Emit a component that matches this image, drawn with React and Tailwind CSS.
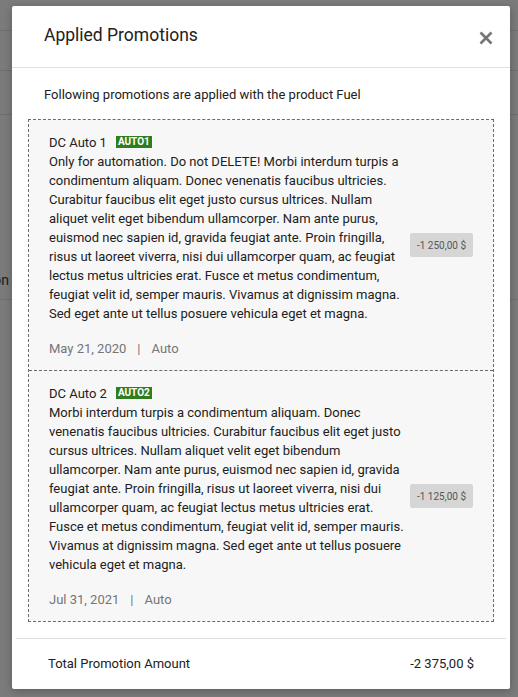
import React from "react";

const cards = [
  {
    title: "DC Auto 1",
    code: "AUTO1",
    text:
      "Only for automation. Do not DELETE! Morbi interdum turpis a condimentum aliquam. Donec venenatis faucibus ultricies. Curabitur faucibus elit eget justo cursus ultrices. Nullam aliquet velit eget bibendum ullamcorper. Nam ante purus, euismod nec sapien id, gravida feugiat ante. Proin fringilla, risus ut laoreet viverra, nisi dui ullamcorper quam, ac feugiat lectus metus ultricies erat. Fusce et metus condimentum, feugiat velit id, semper mauris. Vivamus at dignissim magna. Sed eget ante ut tellus posuere vehicula eget et magna.",
    date: "May 21, 2020",
    amount: "-1 250,00 $",
  },
  {
    title: "DC Auto 2",
    code: "AUTO2",
    text:
      "Morbi interdum turpis a condimentum aliquam. Donec venenatis faucibus ultricies. Curabitur faucibus elit eget justo cursus ultrices. Nullam aliquet velit eget bibendum ullamcorper. Nam ante purus, euismod nec sapien id, gravida feugiat ante. Proin fringilla, risus ut laoreet viverra, nisi dui ullamcorper quam, ac feugiat lectus metus ultricies erat. Fusce et metus condimentum, feugiat velit id, semper mauris. Vivamus at dignissim magna. Sed eget ante ut tellus posuere vehicula eget et magna.",
    date: "Jul 31, 2021",
    amount: "-1 125,00 $",
  },
];

function Card({ c, first }) {
  return (
    <div
      className={
        "flex items-center bg-[#f7f7f7] pl-[20px] pr-[20px] " +
        (first ? "" : "border-t border-dashed border-[#6b6b6b]")
      }
    >
      <div className="w-[357px] pt-[13px] pb-[12px]">
        <div className="flex items-center gap-[9px] h-[19px]">
          <span className="text-[13px] leading-[19px] text-[#212121]">{c.title}</span>
          <span className="bg-[#2f7d1f] text-white text-[10px] font-bold leading-[12px] px-[2px] mt-[-2px]">
            {c.code}
          </span>
        </div>
        <p className="text-[13px] leading-[19px] text-[#212121]">{c.text}</p>
        <div className="mt-[16px] text-[13px] leading-[19px] text-[#757575] flex gap-[11px]">
          <span>{c.date}</span>
          <span>|</span>
          <span>Auto</span>
        </div>
      </div>
      <div className="ml-auto bg-[#d6d6d6] rounded-[2px] w-[63px] h-[24px] flex items-center justify-center text-[10px] text-[#555]">
        {c.amount}
      </div>
    </div>
  );
}

export default function App() {
  return (
    <div
      className="relative w-[518px] h-[697px] overflow-hidden bg-[#7b7b7b]"
      style={{ fontFamily: "Roboto, 'Liberation Sans', sans-serif" }}
    >
      {/* dimmed page behind */}
      <div className="flex flex-col">
        <div className="h-[31px] border-b border-[#6e6e6e]" />
        <div className="h-[40px] border-b border-[#6e6e6e]" />
        <div className="h-[44px] border-b border-[#6e6e6e]" />
        <div className="h-[185px] border-b border-[#6e6e6e] relative">
          <span className="absolute left-[-62px] top-[155px] text-[14px] text-[#1a1a1a]">Description</span>
        </div>
      </div>

      {/* modal */}
      <div className="absolute left-[12px] top-[6px] w-[498px] h-[683px] bg-white rounded-[2px] shadow-[0_2px_8px_rgba(0,0,0,0.25)] flex flex-col">
        <div className="shrink-0 h-[62px] border-b border-[#e0e0e0] flex items-center pl-[32px] pr-[16px]">
          <h2 className="text-[17.5px] text-[#212121] leading-none mt-[-2px]">Applied Promotions</h2>
          <button className="ml-auto mt-[2px] w-[16px] h-[16px] flex items-center justify-center">
            <svg width="14" height="14" viewBox="0 0 14 14">
              <path d="M1.5 1.5 L12.5 12.5 M12.5 1.5 L1.5 12.5" stroke="#757575" strokeWidth="2.6" strokeLinecap="butt" />
            </svg>
          </button>
        </div>
        <div className="shrink-0 pl-[32px] pt-[17px] pb-[15px] text-[13px] leading-[19px] text-[#212121]">
          Following promotions are applied with the product Fuel
        </div>
        <div className="shrink-0 mx-[16px] border border-dashed border-[#6b6b6b]">
          {cards.map((c, i) => (
            <Card key={c.code} c={c} first={i === 0} />
          ))}
        </div>
        <div className="shrink-0 mt-[16px] mx-[4px] border-t border-[#e0e0e0] flex items-center justify-between pl-[32px] pr-[32px] h-[51px]">
          <span className="text-[13px] text-[#212121]">Total Promotion Amount</span>
          <span className="text-[13px] text-[#212121]">-2 375,00 $</span>
        </div>
      </div>
    </div>
  );
}
